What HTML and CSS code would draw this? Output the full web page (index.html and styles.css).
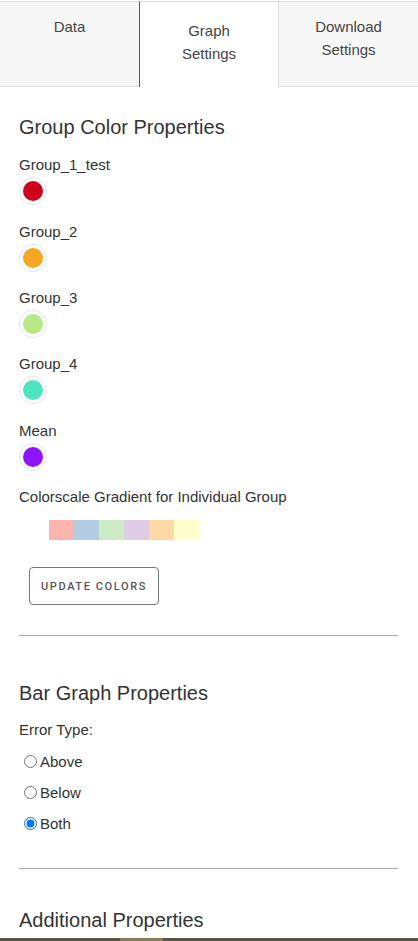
FILE: index.html
```html
<!DOCTYPE html>
<html>
<head>
<meta charset="utf-8">
<link rel="stylesheet" href="styles.css">
</head>
<body>
<div class="page">
  <div class="tabs">
    <div class="tab">Data</div>
    <div class="tab active">Graph<br>Settings</div>
    <div class="tab">Download<br>Settings</div>
  </div>
  <div class="content">
    <h2 class="heading first">Group Color Properties</h2>
    <div class="group">
      <div class="label">Group_1_test</div>
      <div class="swatch"><span class="dot red"></span></div>
    </div>
    <div class="group">
      <div class="label">Group_2</div>
      <div class="swatch"><span class="dot orange"></span></div>
    </div>
    <div class="group">
      <div class="label">Group_3</div>
      <div class="swatch"><span class="dot green"></span></div>
    </div>
    <div class="group">
      <div class="label">Group_4</div>
      <div class="swatch"><span class="dot teal"></span></div>
    </div>
    <div class="group">
      <div class="label">Mean</div>
      <div class="swatch"><span class="dot purple"></span></div>
    </div>
    <div class="group scale">
      <div class="label">Colorscale Gradient for Individual Group</div>
      <div class="scale-row">
        <span class="cell c1"></span><span class="cell c2"></span><span class="cell c3"></span><span class="cell c4"></span><span class="cell c5"></span><span class="cell c6"></span>
      </div>
    </div>
    <button class="btn">UPDATE COLORS</button>
    <div class="divider d1"></div>

    <h2 class="heading bar">Bar Graph Properties</h2>
    <div class="label error">Error Type:</div>
    <label class="radio"><input type="radio" name="err">Above</label>
    <label class="radio"><input type="radio" name="err">Below</label>
    <label class="radio"><input type="radio" name="err" checked>Both</label>
    <div class="divider d2"></div>

    <h2 class="heading add">Additional Properties</h2>
  </div>
  <div class="strip"></div>
</div>
</body>
</html>
```
FILE: styles.css
```css
html, body {
  margin: 0;
  padding: 0;
  overflow: hidden;
  background: #fff;
}
body {
  font-family: "Liberation Sans", Arial, sans-serif;
  color: #333;
}
.page {
  width: 418px;
  height: 941px;
  display: flex;
  flex-direction: column;
}
.tabs {
  display: flex;
  margin-top: 1px;
  height: 86px;
}
.tab {
  box-sizing: border-box;
  width: 139px;
  height: 86px;
  background: #f7f7f7;
  border-top: 1px solid #dedede;
  border-bottom: 1px solid #dedede;
  text-align: center;
  font-size: 15px;
  line-height: 23px;
  color: #444;
  padding-top: 13px;
}
.tab:last-child {
  width: 140px;
  border-left: 1px solid #dedede;
}
.tab.active {
  background: #fff;
  border-bottom: none;
  border-left: 1px solid #555;
  padding-top: 17px;
}
.content {
  padding: 0 20px 0 19px;
}
.heading {
  margin: 0;
  font-size: 20px;
  font-weight: normal;
  line-height: 24px;
  color: #333;
}
.heading.first { margin-top: 28px; margin-bottom: 1px; }
.group { margin-top: 16.35px; }
.label {
  font-size: 15px;
  line-height: 20px;
  color: #333;
}
.swatch {
  box-sizing: border-box;
  margin-top: 2px;
  width: 28px;
  height: 28px;
  border-radius: 50%;
  border: 1px solid #e2e8ea;
  padding: 3px;
  background: #fff;
}
.dot {
  display: block;
  width: 20px;
  height: 20px;
  border-radius: 50%;
}
.red { background: #d0021b; }
.orange { background: #f5a623; }
.green { background: #b8e986; }
.teal { background: #50e3c2; }
.purple { background: #9013fe; }
.scale-row {
  display: flex;
  margin: 13px 0 0 30px;
}
.cell { width: 25px; height: 20px; }
.c1 { background: #fbb4ae; }
.c2 { background: #b3cde3; }
.c3 { background: #ccebc5; }
.c4 { background: #decbe4; }
.c5 { background: #fed9a6; }
.c6 { background: #ffffcc; }
.btn {
  display: block;
  box-sizing: border-box;
  margin: 27px 0 0 10px;
  width: 130px;
  height: 38px;
  background: #fff;
  border: 1px solid #777;
  border-radius: 4px;
  font-family: Roboto, "Liberation Sans", sans-serif;
  font-size: 11px;
  font-weight: 500;
  letter-spacing: 1.6px;
  color: #555;
  padding: 0;
  text-align: center;
}
.divider {
  height: 1px;
  background: #a8a8a8;
}
.d1 { margin-top: 30px; }
.heading.bar { margin-top: 45px; }
.label.error { margin-top: 15px; }
.radio {
  display: flex;
  align-items: center;
  font-size: 15px;
  line-height: 20px;
  height: 20px;
  margin-top: 11px;
  color: #333;
}
.label.error + .radio { margin-top: 11.5px; }
.radio input {
  margin: 0 3px 0 5px;
  width: 13px;
  height: 13px;
}
.d2 { margin-top: 34px; }
.heading.add { margin-top: 39px; }
.strip {
  margin-top: auto;
  height: 3px;
  background: linear-gradient(to right, #57573f 0, #57573f 120px, #8c7c52 120px, #8c7c52 163px, #57573f 163px);
}
```
